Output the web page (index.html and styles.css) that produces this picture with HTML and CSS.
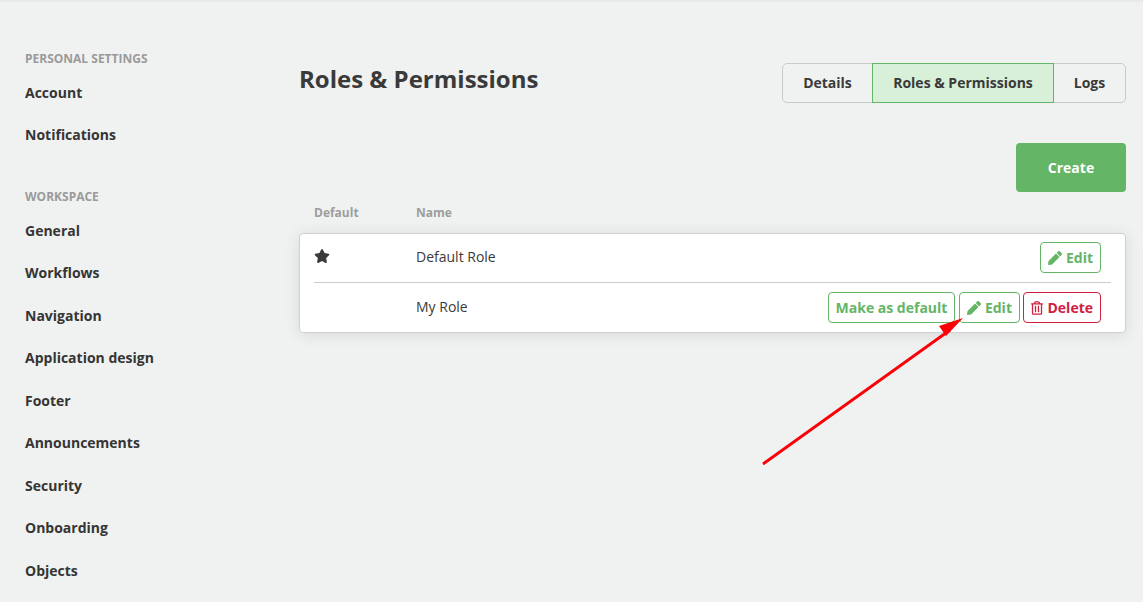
FILE: index.html
```html
<!DOCTYPE html>
<html lang="en">
<head>
<meta charset="utf-8">
<title>Roles &amp; Permissions</title>
<link rel="stylesheet" href="styles.css">
</head>
<body>
<div class="layout">
  <aside class="sidebar">
    <div class="side-label">Personal settings</div>
    <a class="side-item">Account</a>
    <a class="side-item">Notifications</a>
    <div class="side-label second">Workspace</div>
    <a class="side-item">General</a>
    <a class="side-item">Workflows</a>
    <a class="side-item">Navigation</a>
    <a class="side-item">Application design</a>
    <a class="side-item">Footer</a>
    <a class="side-item">Announcements</a>
    <a class="side-item">Security</a>
    <a class="side-item">Onboarding</a>
    <a class="side-item">Objects</a>
  </aside>
  <main class="main">
    <header class="head">
      <h1 class="title">Roles &amp; Permissions</h1>
      <nav class="tabs">
        <a class="tab tab-details">Details</a>
        <a class="tab tab-active">Roles &amp; Permissions</a>
        <a class="tab tab-logs">Logs</a>
      </nav>
    </header>
    <div class="create-row"><button class="create">Create</button></div>
    <div class="table-head">
      <span class="col-default">Default</span>
      <span>Name</span>
    </div>
    <section class="card">
      <div class="row">
        <span class="col-default">
          <svg class="star" viewBox="0 0 576 512"><path d="M259.3 17.8L194 150.2 47.9 171.5c-26.2 3.8-36.7 36.1-17.7 54.6l105.7 103-25 145.5c-4.5 26.3 23.2 46 46.4 33.7L288 439.6l130.7 68.7c23.2 12.2 50.9-7.4 46.4-33.7l-25-145.5 105.7-103c19-18.5 8.5-50.8-17.7-54.6L382 150.2 316.7 17.8c-11.7-23.6-45.6-23.9-57.4 0z"/></svg>
        </span>
        <span class="role-name">Default Role</span>
        <div class="actions">
          <button class="btn btn-green">
            <svg class="ico" viewBox="0 0 512 512"><path d="M497.9 142.1l-46.1 46.1c-4.7 4.7-12.3 4.7-17 0l-111-111c-4.7-4.7-4.7-12.3 0-17l46.1-46.1c18.7-18.7 49.1-18.7 67.9 0l60.1 60.1c18.8 18.7 18.8 49.1 0 67.9zM284.2 99.8L21.6 362.4.4 483.9c-2.9 16.4 11.4 30.6 27.8 27.8l121.5-21.3 262.6-262.6c4.7-4.7 4.7-12.3 0-17l-111-111c-4.8-4.7-12.4-4.7-17.1 0z"/></svg>Edit
          </button>
        </div>
      </div>
      <div class="row row-last">
        <span class="col-default"></span>
        <span class="role-name">My Role</span>
        <div class="actions">
          <button class="btn btn-green">Make as default</button>
          <button class="btn btn-green">
            <svg class="ico" viewBox="0 0 512 512"><path d="M497.9 142.1l-46.1 46.1c-4.7 4.7-12.3 4.7-17 0l-111-111c-4.7-4.7-4.7-12.3 0-17l46.1-46.1c18.7-18.7 49.1-18.7 67.9 0l60.1 60.1c18.8 18.7 18.8 49.1 0 67.9zM284.2 99.8L21.6 362.4.4 483.9c-2.9 16.4 11.4 30.6 27.8 27.8l121.5-21.3 262.6-262.6c4.7-4.7 4.7-12.3 0-17l-111-111c-4.8-4.7-12.4-4.7-17.1 0z"/></svg>Edit
          </button>
          <button class="btn btn-red">
            <svg class="ico ico-trash" viewBox="0 0 448 512"><path d="M268 416h24a12 12 0 0 0 12-12V188a12 12 0 0 0-12-12h-24a12 12 0 0 0-12 12v216a12 12 0 0 0 12 12zM432 80h-82.4l-34-56.7A48 48 0 0 0 274.4 0H173.6a48 48 0 0 0-41.2 23.3L98.4 80H16A16 16 0 0 0 0 96v16a16 16 0 0 0 16 16h16v336a48 48 0 0 0 48 48h288a48 48 0 0 0 48-48V128h16a16 16 0 0 0 16-16V96a16 16 0 0 0-16-16zM171.8 50.9A6 6 0 0 1 177 48h94a6 6 0 0 1 5.1 2.9L293.6 80H154.4zM368 464H80V128h288zm-212-48h24a12 12 0 0 0 12-12V188a12 12 0 0 0-12-12h-24a12 12 0 0 0-12 12v216a12 12 0 0 0 12 12z"/></svg>Delete
          </button>
        </div>
      </div>
    </section>
  </main>
</div>
<svg class="arrow" width="1143" height="602" viewBox="0 0 1143 602">
  <line x1="763" y1="464" x2="950" y2="330" stroke="#fb0007" stroke-width="2.8"/>
  <polygon points="963,318 946,336 939,326" fill="#fb0007"/>
</svg>
</body>
</html>
```
FILE: styles.css
```css
* { box-sizing: border-box; }
html, body { margin: 0; height: 602px; overflow: hidden; }
body {
  background: #f0f2f1;
  font-family: "Open Sans", "Liberation Sans", sans-serif;
  color: #3a3a3a;
  box-shadow: inset 0 3px 3px -2px rgba(0,0,0,.06);
}
.layout { display: flex; align-items: flex-start; padding-right: 17px; }
.sidebar { width: 299px; flex: none; padding: 50px 0 0 25px; display: flex; flex-direction: column; }
.side-label {
  font-size: 12px; line-height: 17px; font-weight: 700; text-transform: uppercase;
  color: #9a9a9a; margin-bottom: 15.9px;
}
.side-label.second { margin-top: 20px; margin-bottom: 16px; }
.side-item { font-size: 14px; line-height: 20px; font-weight: 700; color: #353535; margin-bottom: 22.5px; }
.main { flex: 1; min-width: 0; padding-top: 63px; }
.head { display: flex; justify-content: space-between; align-items: flex-start; }
.title { margin: -1px 0 0; font-size: 24px; line-height: 33px; font-weight: 700; color: #3a3a3a; }
.tabs { display: flex; height: 40px; border: 1px solid #c9cbca; border-radius: 5px; font-size: 14px; font-weight: 700; color: #3a3a3a; }
.tab { display: flex; align-items: center; justify-content: center; line-height: 20px; }
.tab-details { width: 89px; }
.tab-active { width: 182px; height: 40px; margin: -1px 0; background: #d8efd8; border: 1px solid #64b566; }
.tab-logs { width: 71px; }
.create-row { display: flex; justify-content: flex-end; margin-top: 40px; }
.create {
  width: 110px; height: 49px; border: 0; border-radius: 4px; background: #64b566; color: #fff;
  font: 700 14px/20px "Open Sans", "Liberation Sans", sans-serif;
}
.table-head { display: flex; height: 41px; padding: 12px 15px 0; font-size: 12px; line-height: 17px; font-weight: 700; color: #9d9d9d; }
.col-default { width: 102px; flex: none; display: flex; }
.card {
  height: 100px; background: #fff; border: 1px solid #cfd1d0; border-radius: 4px; padding: 0 14px;
  box-shadow: 0 2px 16px rgba(0,0,0,.1);
}
.row { height: 49px; display: flex; align-items: center; border-bottom: 1px solid #cdcdcd; }
.row-last { border-bottom: 0; height: 50px; }
.star { width: 16px; height: 14px; fill: #3a3a3a; margin-top: -5px; }
.role-name { font-size: 14px; line-height: 20px; color: #3a3a3a; flex: 1; margin-top: -2px; }
.actions { display: flex; gap: 3.5px; margin-right: 10px; margin-top: -1px; }
.btn {
  height: 31px; padding: 0 7px; background: #fff; border: 1px solid #64b566; border-radius: 4px;
  color: #64b566; display: flex; align-items: center;
  font: 700 14px/20px "Open Sans", "Liberation Sans", sans-serif;
}
.btn-red { border-color: #d0213f; color: #d0213f; }
.ico { width: 14px; height: 14px; fill: currentColor; margin-right: 4px; }
.ico-trash { width: 12px; height: 14px; margin-right: 4px; }
.arrow { position: absolute; left: 0; top: 0; pointer-events: none; }
```
